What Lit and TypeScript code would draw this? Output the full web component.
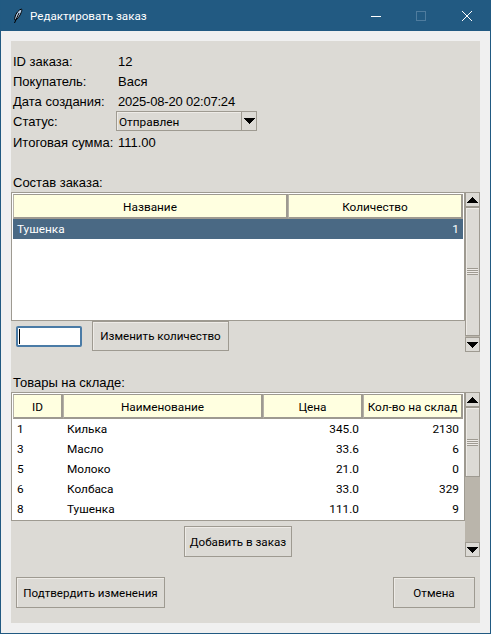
import { css, html, LitElement } from "lit";
import { customElement, property } from "lit/decorators.js";

type Column = { title: string; width: number; align?: "left" | "right" };

const ORDER_COLUMNS: Column[] = [
	{ title: "Название", width: 275 },
	{ title: "Количество", width: 175, align: "right" },
];
const ORDER_ROWS = [["Тушенка", "1"]];

const STOCK_COLUMNS: Column[] = [
	{ title: "ID", width: 50 },
	{ title: "Наименование", width: 200 },
	{ title: "Цена", width: 100, align: "right" },
	{ title: "Кол-во на склад", width: 100, align: "right" },
];
const STOCK_ROWS = [
	["1", "Килька", "345.0", "2130"],
	["3", "Масло", "33.6", "6"],
	["5", "Молоко", "21.0", "0"],
	["6", "Колбаса", "33.0", "329"],
	["8", "Тушенка", "111.0", "9"],
];

const ARROW_UP = html`<svg width="11" height="6" viewBox="0 0 11 6" shape-rendering="crispEdges"><path d="M5 0h1v1h1v1h1v1h1v1h1v1h1v1H0V5h1V4h1V3h1V2h1V1h1z" fill="#000" /></svg>`;
const ARROW_DOWN = html`<svg width="11" height="6" viewBox="0 0 11 6" shape-rendering="crispEdges"><path d="M0 0h11v1h-1v1H9v1H8v1H7v1H6v1H5V5H4V4H3V3H2V2H1V1H0z" fill="#000" /></svg>`;

/** Clam-style vertical scrollbar. */
@customElement("clam-scrollbar")
export class ClamScrollbar extends LitElement {
	static override styles = css`
		:host {
			display: flex;
			flex-direction: column;
			width: 15px;
			background: #bab5ab;
		}
		.arrow {
			height: 15px;
			flex: none;
			box-sizing: border-box;
			border: 1px solid #9e9a91;
			background: #dcdad5;
			display: flex;
			align-items: center;
			justify-content: center;
		}
		.thumb {
			flex: none;
			box-sizing: border-box;
			border: 1px solid #9e9a91;
			background: #dcdad5;
			box-shadow: inset 1px 1px 0 #eeebe7;
			display: flex;
			align-items: center;
			justify-content: center;
		}
		.grip {
			width: 11px;
			height: 7px;
			background: repeating-linear-gradient(to bottom, #9e9a91 0 1px, #eeebe7 1px 2px);
		}
		.trough {
			flex: 1;
		}
	`;

	@property({ type: Number }) thumb = 0;

	override render() {
		return html`
			<div class="arrow">${ARROW_UP}</div>
			<div class="thumb" style="height:${this.thumb}px"><div class="grip"></div></div>
			<div class="trough"></div>
			<div class="arrow">${ARROW_DOWN}</div>
		`;
	}
}

/** Treeview table with a pale yellow heading row. */
@customElement("clam-tree")
export class ClamTree extends LitElement {
	static override styles = css`
		:host {
			display: block;
			box-sizing: border-box;
			height: 129px;
			border: 1px solid #9e9a91;
			background: #fff;
			padding: 1px;
			font: 11.8px Roboto, sans-serif;
			color: #000;
		}
		.head,
		.row {
			display: flex;
		}
		.heading {
			box-sizing: border-box;
			height: 25px;
			padding-top: 2px;
			display: flex;
			align-items: center;
			justify-content: center;
			background: #ffffe0;
			border: 1px solid #9e9a91;
			border-right-width: 2px;
			border-bottom-width: 2px;
			border-left-color: #b5b2a8;
			white-space: nowrap;
		}
		.row {
			height: 20px;
			align-items: center;
		}
		.row.selected {
			background: #4a6984;
			color: #fff;
		}
		.cell {
			box-sizing: border-box;
			padding: 0 4px;
			white-space: nowrap;
		}
		.cell.right {
			text-align: right;
		}
	`;

	@property({ attribute: false }) columns: Column[] = [];
	@property({ attribute: false }) rows: string[][] = [];
	@property({ type: Number }) selected = -1;

	override render() {
		return html`
			<div class="head">
				${this.columns.map((c) => html`<div class="heading" style="width:${c.width}px">${c.title}</div>`)}
			</div>
			${this.rows.map(
				(row, i) => html`
					<div class="row ${i === this.selected ? "selected" : ""}">
						${row.map((value, j) => {
							const col = this.columns[j];
							return html`<div class="cell ${col.align === "right" ? "right" : ""}" style="width:${col.width}px">${value}</div>`;
						})}
					</div>
				`,
			)}
		`;
	}
}

@customElement("app-root")
export class AppRoot extends LitElement {
	static override styles = css`
		:host {
			display: block;
			width: 491px;
			height: 634px;
			box-sizing: border-box;
			border: 1px solid #215a82;
			border-top: none;
			background: #f0f0f0;
			font: 13px "Liberation Sans", Arial, sans-serif;
			color: #000;
			overflow: hidden;
		}
		.titlebar {
			height: 31px;
			background: #225a82;
			display: flex;
			align-items: center;
			color: #fff;
			font: 11.6px Roboto, sans-serif;
			padding-left: 12px;
		}
		.titlebar .feather {
			margin-right: 7px;
		}
		.controls {
			margin-left: auto;
			display: flex;
			height: 100%;
		}
		.control {
			width: 46px;
			display: flex;
			align-items: center;
			justify-content: center;
		}
		.control.min {
			width: 44px;
		}
		.client {
			padding: 10px;
		}
		.panel {
			height: 582px;
			box-sizing: border-box;
			background: #dcdad5;
			padding: 10px 0;
			display: flex;
			flex-direction: column;
		}
		.info {
			display: grid;
			grid-template-columns: 103px auto;
			grid-template-rows: repeat(4, 20px) 21px;
			align-items: center;
			justify-content: start;
			padding-left: 2px;
		}
		.info .value {
			padding-left: 2px;
		}
		.info .date {
			letter-spacing: -0.2px;
		}
		.info .total {
			padding-top: 2px;
		}
		.combo {
			display: flex;
			width: 141px;
			height: 20px;
			box-sizing: border-box;
			border: 1px solid #9e9a91;
			background: #dcdad5;
		}
		.combo .text {
			flex: 1;
			padding-left: 2px;
			font: 11.8px/20px Roboto, sans-serif;
			box-shadow: inset 1px 1px 0 #eeebe7;
		}
		.combo .drop {
			width: 14px;
			border-left: 1px solid #9e9a91;
			display: flex;
			align-items: center;
			justify-content: center;
		}
		.caption {
			height: 20px;
			line-height: 22px;
			padding-left: 2px;
			margin-top: 20px;
		}
		.section {
			display: grid;
			grid-template-columns: 454px 15px;
		}
		.controls-row {
			display: flex;
			height: 31px;
			padding-left: 5px;
			gap: 10px;
		}
		.entry {
			box-sizing: border-box;
			width: 66px;
			height: 21px;
			margin-top: 5px;
			background: #fff;
			border: 2px solid #4a7ba6;
			border-radius: 2px;
		}
		.entry::before {
			content: "";
			display: block;
			width: 1px;
			height: 15px;
			margin: 1px 0 0 1px;
			background: #000;
		}
		button {
			box-sizing: border-box;
			height: 30px;
			padding: 0;
			border: 1px solid #9e9a91;
			background: #dcdad5;
			color: #000;
			font: 11.6px Roboto, sans-serif;
			box-shadow: inset 1px 1px 0 #eeebe7;
		}
		.change {
			width: 137px;
		}
		.add-row {
			display: flex;
			justify-content: center;
			padding-top: 5px;
			height: 36px;
			box-sizing: border-box;
		}
		.add {
			width: 108px;
			height: 31px;
		}
		.footer {
			margin-top: 20px;
			padding: 0 5px;
			display: flex;
			justify-content: space-between;
		}
		.footer button {
			height: 31px;
		}
		.confirm {
			width: 149px;
		}
		.cancel {
			width: 82px;
		}
	`;

	private renderFeather() {
		return html`<svg class="feather" width="10" height="16" viewBox="0 0 10 16">
			<path d="M8.5 1C5.5 2 3 5 2 9c-.4 1.6-.4 2.6 0 3.3C4.5 11 7 8 8.2 4.5 8.8 3 9 1.8 8.5 1z" fill="#b9cfea" stroke="#000" stroke-width="1" />
			<path d="M6 5 1.5 15" stroke="#000" stroke-width="1" fill="none" />
		</svg>`;
	}

	override render() {
		return html`
			<div class="titlebar">
				${this.renderFeather()}
				<span>Редактировать заказ</span>
				<div class="controls">
					<div class="control min">
						<svg width="10" height="10" viewBox="0 0 10 10"><path d="M0 5.5h10" stroke="#fff" /></svg>
					</div>
					<div class="control">
						<svg width="10" height="10" viewBox="0 0 10 10"><rect x=".5" y=".5" width="9" height="9" fill="none" stroke="#4f7c9e" /></svg>
					</div>
					<div class="control">
						<svg width="12" height="12" viewBox="0 0 12 12"><path d="M1 1l10 10M11 1 1 11" stroke="#fff" fill="none" /></svg>
					</div>
				</div>
			</div>
			<div class="client">
				<div class="panel">
					<div class="info">
						<div>ID заказа:</div>
						<div class="value">12</div>
						<div>Покупатель:</div>
						<div class="value">Вася</div>
						<div>Дата создания:</div>
						<div class="value date">2025-08-20 02:07:24</div>
						<div>Статус:</div>
						<div class="combo">
							<div class="text">Отправлен</div>
							<div class="drop">${ARROW_DOWN}</div>
						</div>
						<div class="total">Итоговая сумма:</div>
						<div class="value total">111.00</div>
					</div>

					<div class="caption">Состав заказа:</div>
					<div class="section">
						<div>
							<clam-tree .columns=${ORDER_COLUMNS} .rows=${ORDER_ROWS} selected="0"></clam-tree>
							<div class="controls-row">
								<div class="entry"></div>
								<button class="change">Изменить количество</button>
							</div>
						</div>
						<clam-scrollbar thumb="129"></clam-scrollbar>
					</div>

					<div class="caption">Товары на складе:</div>
					<div class="section">
						<div>
							<clam-tree .columns=${STOCK_COLUMNS} .rows=${STOCK_ROWS}></clam-tree>
							<div class="add-row"><button class="add">Добавить в заказ</button></div>
						</div>
						<clam-scrollbar thumb="70"></clam-scrollbar>
					</div>

					<div class="footer">
						<button class="confirm">Подтвердить изменения</button>
						<button class="cancel">Отмена</button>
					</div>
				</div>
			</div>
		`;
	}
}
